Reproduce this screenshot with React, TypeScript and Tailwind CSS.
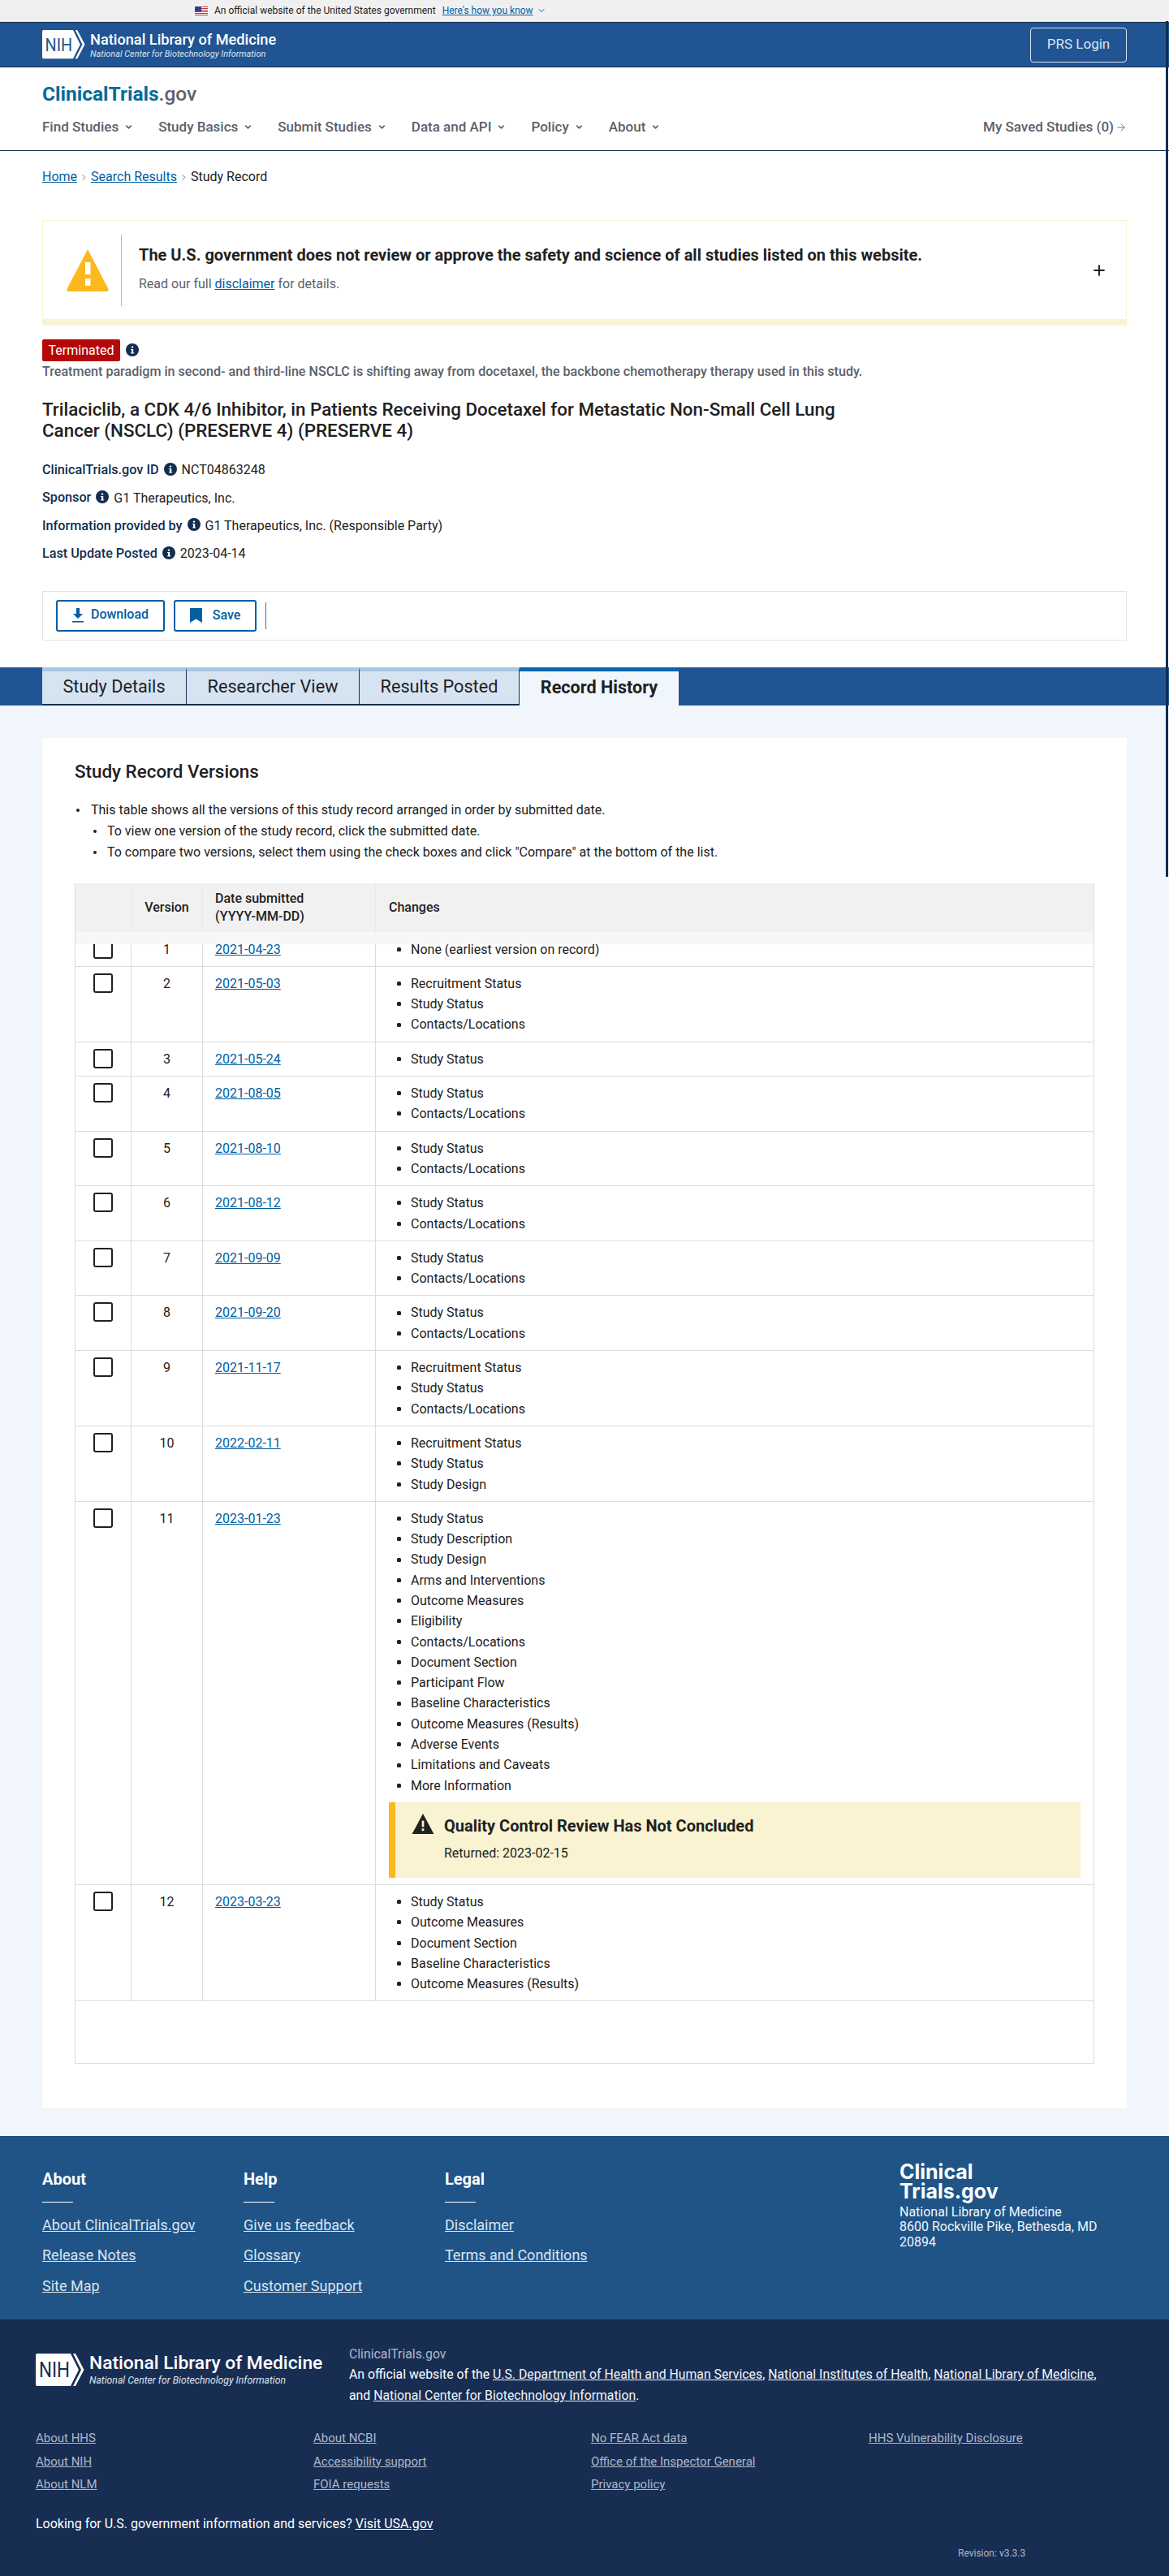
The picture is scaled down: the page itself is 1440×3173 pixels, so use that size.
import React from "react";
import { ChevronDown, ChevronRight, ArrowRight, Plus } from "lucide-react";

const topLinks = ["Find Studies", "Study Basics", "Submit Studies", "Data and API", "Policy", "About"];

const rows = [
  { v: 2, date: "2021-05-03", changes: ["Recruitment Status", "Study Status", "Contacts/Locations"] },
  { v: 3, date: "2021-05-24", changes: ["Study Status"] },
  { v: 4, date: "2021-08-05", changes: ["Study Status", "Contacts/Locations"] },
  { v: 5, date: "2021-08-10", changes: ["Study Status", "Contacts/Locations"] },
  { v: 6, date: "2021-08-12", changes: ["Study Status", "Contacts/Locations"] },
  { v: 7, date: "2021-09-09", changes: ["Study Status", "Contacts/Locations"] },
  { v: 8, date: "2021-09-20", changes: ["Study Status", "Contacts/Locations"] },
  { v: 9, date: "2021-11-17", changes: ["Recruitment Status", "Study Status", "Contacts/Locations"] },
  { v: 10, date: "2022-02-11", changes: ["Recruitment Status", "Study Status", "Study Design"] },
  {
    v: 11,
    date: "2023-01-23",
    changes: [
      "Study Status",
      "Study Description",
      "Study Design",
      "Arms and Interventions",
      "Outcome Measures",
      "Eligibility",
      "Contacts/Locations",
      "Document Section",
      "Participant Flow",
      "Baseline Characteristics",
      "Outcome Measures (Results)",
      "Adverse Events",
      "Limitations and Caveats",
      "More Information",
    ],
    qc: true,
  },
  {
    v: 12,
    date: "2023-03-23",
    changes: ["Study Status", "Outcome Measures", "Document Section", "Baseline Characteristics", "Outcome Measures (Results)"],
  },
];

const tabs = [
  { label: "Study Details", width: "w-[178px]" },
  { label: "Researcher View", width: "w-[213px]" },
  { label: "Results Posted", width: "w-[197px]" },
];

function NihLogo({ width, textColor }: { width: number; textColor: string }) {
  return (
    <svg width={width} viewBox="0 0 60 40" className="shrink-0">
      <path d="M2 0H43L53 20L43 40H2Q0 40 0 38V2Q0 0 2 0Z" fill="#fff" />
      <path d="M46 0H49L59.5 20L49 40H46L56 20Z" fill="#fff" />
      <text x="4" y="29" fontSize="25" fontFamily="Roboto, sans-serif" textLength="38" lengthAdjust="spacingAndGlyphs" fill={textColor}>
        NIH
      </text>
    </svg>
  );
}

function InfoDot() {
  return (
    <svg width="16" height="16" viewBox="0 0 16 16" className="shrink-0">
      <circle cx="8" cy="8" r="8" fill="#112e51" />
      <rect x="7" y="7" width="2.2" height="5.2" fill="#fff" />
      <rect x="6" y="7" width="1.5" height="1" fill="#fff" />
      <rect x="6" y="11.4" width="4.2" height="1" fill="#fff" />
      <circle cx="8" cy="4.6" r="1.2" fill="#fff" />
    </svg>
  );
}

function FlagIcon() {
  return (
    <svg width="16" height="11" viewBox="0 0 16 11" className="shrink-0">
      <rect width="16" height="11" fill="#fff" />
      <rect y="0" width="16" height="1" fill="#c8313e" />
      <rect y="2" width="16" height="1" fill="#c8313e" />
      <rect y="4" width="16" height="1" fill="#c8313e" />
      <rect y="6" width="16" height="1" fill="#c8313e" />
      <rect y="8" width="16" height="1" fill="#c8313e" />
      <rect y="10" width="16" height="1" fill="#c8313e" />
      <rect width="8" height="6" fill="#3b3b8f" />
    </svg>
  );
}

function MetaLine({ label, value }: { label: string; value: string }) {
  return (
    <div className="flex items-center h-[34.4px] text-[16px]">
      <span className="font-medium text-[#112e51] text-[16.2px]">{label}</span>
      <span className="mx-[6px] -mt-[3px]">
        <InfoDot />
      </span>
      <span className="text-[#212121]">{value}</span>
    </div>
  );
}

function Check() {
  return <div className="w-[24px] h-[24px] rounded-[3px] border-2 border-[#212121] bg-white" />;
}

function Row({ v, date, changes, qc, className }: { v: number; date: string; changes: string[]; qc?: boolean; className?: string }) {
  return (
    <div className={"flex border-b border-[#dcdcdc] bg-white " + (className ?? "")}>
      <div className="w-[69px] pl-[22px] pt-[8px] border-r border-[#dcdcdc] shrink-0">
        <Check />
      </div>
      <div className="w-[88px] pt-[8px] text-center leading-[25.3px] border-r border-[#dcdcdc] shrink-0">{v}</div>
      <div className="w-[213px] pt-[8px] pl-[15px] leading-[25.3px] border-r border-[#dcdcdc] shrink-0">
        <a className="text-[#005ea2] underline">{date}</a>
      </div>
      <div className="flex-1 pl-[16px] pr-[16px] pt-[8px] pb-[8px]">
        <ul className="leading-[25.3px]">
          {changes.map((c) => (
            <li key={c} className="flex items-center">
              <span className="w-[5px] h-[5px] ml-[10px] mr-[12px] bg-[#212121] rounded-[1.5px]" />
              {c}
            </li>
          ))}
        </ul>
        {qc && (
          <div className="mt-[8px] h-[93px] bg-[#f9f3d2] border-l-[8px] border-[#fdb81e] pl-[20px] pt-[14px] flex gap-[12px]">
            <svg width="28" height="25" viewBox="0 0 28 26" className="shrink-0">
              <path d="M14 0L28 26H0Z" fill="#212121" />
              <rect x="12.6" y="9" width="2.8" height="8" fill="#f9f3d2" />
              <rect x="12.6" y="19" width="2.8" height="3" fill="#f9f3d2" />
            </svg>
            <div>
              <div className="text-[20px] font-bold leading-[30px] text-[#212121]">Quality Control Review Has Not Concluded</div>
              <div className="mt-[7px] leading-[24px] text-[#212121]">Returned: 2023-02-15</div>
            </div>
          </div>
        )}
      </div>
    </div>
  );
}

function FooterCol({ title, links }: { title: string; links: string[] }) {
  return (
    <div className="w-[248px] shrink-0">
      <div className="text-[20px] font-bold text-white leading-[28px]">{title}</div>
      <div className="w-[38px] h-[1px] bg-white mt-[14px]" />
      <div className="mt-[9px] flex flex-col">
        {links.map((l) => (
          <a key={l} className="h-[37.5px] leading-[37.5px] text-[18px] text-[#dce4ef] underline">
            {l}
          </a>
        ))}
      </div>
    </div>
  );
}

function SmallCol({ links }: { links: string[] }) {
  return (
    <div className="w-[342px] shrink-0 flex flex-col">
      {links.map((l) => (
        <a key={l} className="h-[28.5px] leading-[28.5px] text-[15px] text-[#aeb8c9] underline">
          {l}
        </a>
      ))}
    </div>
  );
}

export default function App() {
  return (
    <div className="relative w-[1440px] h-[3173px] overflow-hidden bg-white text-[16px] text-[#212121] font-['Roboto',sans-serif]">
      {/* page scrollbar caught in the capture */}
      <div className="absolute right-[1px] top-[26px] w-[3px] h-[1054px] bg-[#112e51]" />
      {/* gov banner */}
      <div className="h-[27px] bg-[#f0f0f0] border-b border-[#dce4ef] flex items-center pl-[240px] text-[12px] text-[#212121]">
        <FlagIcon />
        <span className="ml-[8px]">An official website of the United States government</span>
        <a className="ml-[8px] text-[#005ea2] underline">Here's how you know</a>
        <ChevronDown size={12} className="ml-[4px] text-[#005ea2]" />
      </div>
      <div className="h-[56px] bg-[#205493] border-t border-b border-[#112e51] flex items-center justify-between pl-[52px] pr-[52px]">
        <div className="flex items-center gap-[6px]">
          <NihLogo width={53} textColor="#205493" />
          <div className="text-white">
            <div className="text-[18.2px] font-medium leading-[23px]">National Library of Medicine</div>
            <div className="text-[10.9px] italic leading-[14px] text-[#dce4ef]">National Center for Biotechnology Information</div>
          </div>
        </div>
        <button className="w-[119px] h-[43px] rounded-[4px] border border-[#dce4ef] text-[#dce4ef] text-[17px]">PRS Login</button>
      </div>
      {/* site header */}
      <div className="h-[103px] border-b border-[#112e51] px-[52px]">
        <div className="pt-[17px] text-[24.5px] leading-[32px] font-bold text-[#046b99]">
          ClinicalTrials<span className="font-medium text-[#5b616b]">.gov</span>
        </div>
        <div className="mt-[12px] flex items-center justify-between">
          <div className="flex items-center gap-[31px]">
            {topLinks.map((t) => (
              <div key={t} className="flex items-center text-[17px] font-medium text-[#5b616b]">
                {t}
                <ChevronDown size={11} strokeWidth={3.5} className="ml-[7px]" />
              </div>
            ))}
          </div>
          <div className="flex items-center text-[17px] font-medium text-[#5b616b]">
            My Saved Studies (0)
            <ArrowRight size={14} strokeWidth={1.5} className="ml-[2px]" />
          </div>
        </div>
      </div>
      {/* breadcrumb */}
      <div className="pl-[52px] pt-[20px] flex items-center text-[16px] leading-[24px]">
        <a className="text-[#005ea2] underline">Home</a>
        <ChevronRight size={11} className="mx-[3px] text-[#5b616b]" />
        <a className="text-[#005ea2] underline">Search Results</a>
        <ChevronRight size={11} className="mx-[3px] text-[#5b616b]" />
        <span>Study Record</span>
      </div>
      {/* disclaimer */}
      <div className="mx-[52px] mt-[41px] h-[130px] border border-[#f9f3d2] border-b-[8px] flex items-center">
        <svg width="52" height="52" viewBox="0 0 52 52" className="ml-[29px] shrink-0">
          <path d="M26 1L51 49Q52 52 49 52H3Q0 52 1 49Z" fill="#fdb81e" stroke="#fdb81e" strokeLinejoin="round" />
          <rect x="23" y="16" width="6.5" height="15" fill="#fff" />
          <rect x="23" y="36" width="6.5" height="9" fill="#fff" />
        </svg>
        <div className="ml-[15px] w-[1px] h-[88px] bg-[#fdb81e]" />
        <div className="ml-[21px] flex-1 -mt-[4px]">
          <div className="text-[20px] font-bold leading-[26px] text-[#212121]">
            The U.S. government does not review or approve the safety and science of all studies listed on this website.
          </div>
          <div className="mt-[12px] text-[16px] leading-[22px] text-[#5b616b]">
            Read our full <a className="text-[#005ea2] underline">disclaimer</a> for details.
          </div>
        </div>
        <Plus size={20} strokeWidth={2.5} className="mr-[23px] text-[#212121]" />
      </div>
      {/* status */}
      <div className="mx-[52px] mt-[17px] flex items-center">
        <span className="w-[96px] h-[27px] rounded-[2px] bg-[#b50909] text-white text-[16px] leading-[27px] text-center">Terminated</span>
        <span className="ml-[7px] -mt-[2px]">
          <InfoDot />
        </span>
      </div>
      <div className="mx-[52px] mt-[2px] text-[16.1px] leading-[22px] font-medium text-[#5b616b]">
        Treatment paradigm in second- and third-line NSCLC is shifting away from docetaxel, the backbone chemotherapy therapy used in this study.
      </div>
      <h1 className="mx-[52px] mt-[22px] w-[1030px] text-[22.4px] leading-[26px] font-medium text-[#212121]">
        Trilaciclib, a CDK 4/6 Inhibitor, in Patients Receiving Docetaxel for Metastatic Non-Small Cell Lung Cancer (NSCLC) (PRESERVE 4) (PRESERVE 4)
      </h1>
      <div className="mx-[52px] mt-[19px]">
        <MetaLine label="ClinicalTrials.gov ID" value="NCT04863248" />
        <MetaLine label="Sponsor" value="G1 Therapeutics, Inc." />
        <MetaLine label="Information provided by" value="G1 Therapeutics, Inc. (Responsible Party)" />
        <MetaLine label="Last Update Posted" value="2023-04-14" />
      </div>
      {/* actions */}
      <div className="mx-[52px] mt-[28px] h-[61px] border border-[#e4e4e4] flex items-center pl-[16px]">
        <button className="w-[134px] h-[39px] rounded-[3px] border-2 border-[#005ea2] flex items-center justify-center gap-[9px] text-[#005ea2] font-medium text-[16px]">
          <svg width="14" height="18" viewBox="0 0 14 18" className="shrink-0">
            <path d="M5 0H9V7H13L7 13L1 7H5Z" fill="currentColor" />
            <rect x="0" y="16" width="14" height="1.6" fill="currentColor" />
          </svg>
          <span className="-mt-[2px]">Download</span>
        </button>
        <button className="ml-[11px] w-[102px] h-[39px] rounded-[3px] border-2 border-[#005ea2] flex items-center justify-center gap-[13px] text-[#005ea2] font-medium text-[16px]">
          <svg width="15" height="18" viewBox="0 0 15 18" className="shrink-0">
            <path d="M1 0H14Q15 0 15 1V18L7.5 13.5L0 18V1Q0 0 1 0Z" fill="currentColor" />
          </svg>
          Save
        </button>
        <div className="ml-[11px] w-[1px] h-[33px] bg-[#5b616b]" />
      </div>
      {/* tabs */}
      <div className="mt-[33px] h-[47px] bg-[#205493] pl-[52px] flex">
        {tabs.map((t) => (
          <div
            key={t.label}
            className={
              t.width +
              " flex items-center justify-center text-[21.7px] bg-[#d6e4f2] border-t-[5px] border-t-[#a8c6e6] border-r border-r-[#112e51] border-b-2 border-b-[#112e51] text-[#212121]"
            }
          >
            {t.label}
          </div>
        ))}
        <div className="w-[196px] flex items-center justify-center text-[21.6px] font-bold bg-[#f0f6fb] border-t-[5px] border-t-[#0b66b0]">Record History</div>
      </div>
      {/* content */}
      <div className="h-[1762px] bg-[#f0f6fb] pt-[40px] px-[52px]">
        <div className="h-[1688px] bg-white pt-[26px] px-[40px]">
          <h2 className="text-[22.4px] leading-[30px] font-medium">Study Record Versions</h2>
          <ul className="mt-[20px] leading-[26px]">
            <li className="flex items-center">
              <span className="w-[4px] h-[4px] ml-[2px] mr-[14px] bg-[#212121] rounded-full" />
              This table shows all the versions of this study record arranged in order by submitted date.
            </li>
            <li className="flex items-center">
              <span className="w-[4px] h-[4px] ml-[23px] mr-[13px] bg-[#212121] rounded-full" />
              To view one version of the study record, click the submitted date.
            </li>
            <li className="flex items-center">
              <span className="w-[4px] h-[4px] ml-[23px] mr-[13px] bg-[#212121] rounded-full" />
              To compare two versions, select them using the check boxes and click "Compare" at the bottom of the list.
            </li>
          </ul>
          <div className="mt-[25px] border-l border-r border-b border-[#dcdcdc]">
            {/* sticky header sits on top of version 1 */}
            <div className="relative z-10">
              <div className="flex h-[60px] bg-[#f1f1f1] font-medium">
                <div className="w-[69px] border-r border-[#e8e8e8]" />
                <div className="w-[88px] flex items-center justify-center border-r border-[#e8e8e8]">Version</div>
                <div className="w-[213px] flex items-center pl-[15px] leading-[22px] border-r border-[#e8e8e8]">
                  Date submitted
                  <br />
                  (YYYY-MM-DD)
                </div>
                <div className="flex-1 flex items-center pl-[16px]">Changes</div>
              </div>
              <div className="h-[15px] bg-[#f7f7f7]" />
            </div>
            <Row v={1} date="2021-04-23" changes={["None (earliest version on record)"]} className="-mt-[14px]" />
            {rows.map((r) => (
              <Row key={r.v} {...r} />
            ))}
            <div className="h-[76px] bg-white" />
          </div>
        </div>
      </div>
      {/* footer */}
      <div className="h-[226px] bg-[#205487] px-[52px] pt-[39px] flex">
        <FooterCol title="About" links={["About ClinicalTrials.gov", "Release Notes", "Site Map"]} />
        <FooterCol title="Help" links={["Give us feedback", "Glossary", "Customer Support"]} />
        <FooterCol title="Legal" links={["Disclaimer", "Terms and Conditions"]} />
        <div className="ml-[312px] -mt-[7px] w-[270px]">
          <div className="text-[25px] font-bold leading-[24px] font-['Inter',sans-serif] text-white">
            Clinical
            <br />
            Trials.gov
          </div>
          <div className="mt-[5px] text-[16px] leading-[18.5px] text-[#f0f6fb]">
            National Library of Medicine
            <br />
            8600 Rockville Pike, Bethesda, MD 20894
          </div>
        </div>
      </div>
      <div className="h-[316px] bg-[#182d52] px-[44px] pt-[42px]">
        <div className="flex">
          <div className="w-[386px] shrink-0 flex items-center gap-[6px] h-[40px]">
            <NihLogo width={60} textColor="#182d52" />
            <div className="text-white">
              <div className="text-[22.8px] font-medium leading-[26px]">National Library of Medicine</div>
              <div className="text-[12.2px] italic leading-[16px] text-[#dce4ef]">National Center for Biotechnology Information</div>
            </div>
          </div>
          <div className="w-[940px] -mt-[12px] text-[15.8px] leading-[25.5px] text-white">
            <div className="text-[#aeb8c9]">ClinicalTrials.gov</div>
            <div>
              An official website of the <a className="underline text-[#f0f6fb]">U.S. Department of Health and Human Services</a>,{" "}
              <a className="underline text-[#f0f6fb]">National Institutes of Health</a>, <a className="underline text-[#f0f6fb]">National Library of Medicine</a>,
              <br />
              and <a className="underline text-[#f0f6fb]">National Center for Biotechnology Information</a>.
            </div>
          </div>
        </div>
        <div className="mt-[26px] flex">
          <SmallCol links={["About HHS", "About NIH", "About NLM"]} />
          <SmallCol links={["About NCBI", "Accessibility support", "FOIA requests"]} />
          <SmallCol links={["No FEAR Act data", "Office of the Inspector General", "Privacy policy"]} />
          <SmallCol links={["HHS Vulnerability Disclosure"]} />
        </div>
        <div className="mt-[22px] text-[16px] leading-[24px] text-white">
          Looking for U.S. government information and services? <a className="underline">Visit USA.gov</a>
        </div>
        <div className="mt-[16px] pl-[1136px] text-[12px] leading-[16px] text-[#aeb8c9]">Revision: v3.3.3</div>
      </div>
    </div>
  );
}
